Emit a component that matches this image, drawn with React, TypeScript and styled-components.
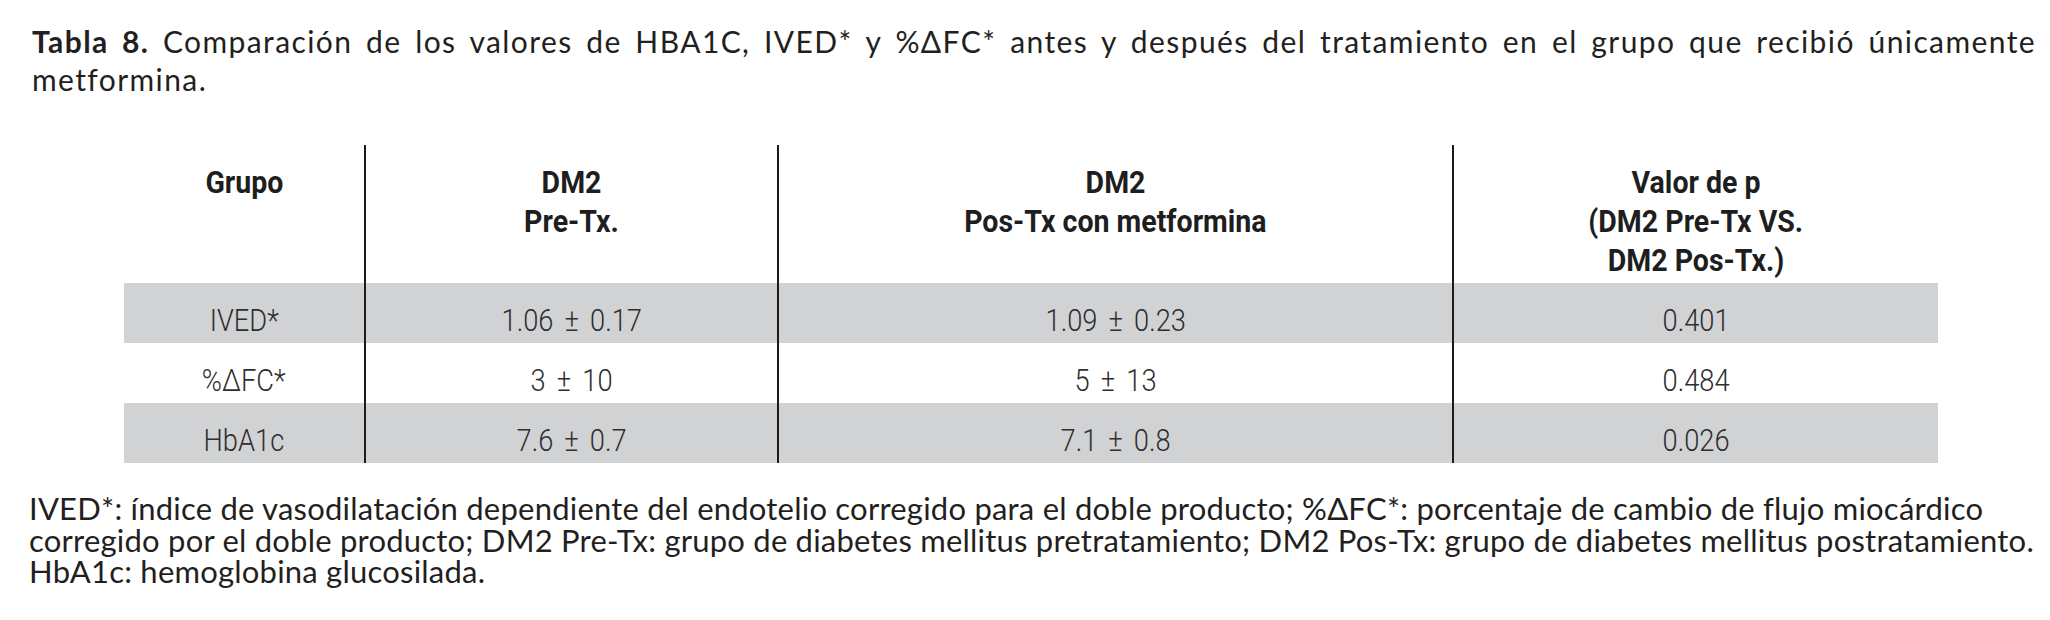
import React from "react";
import styled, { createGlobalStyle } from "styled-components";

const Global = createGlobalStyle`
  html, body { margin: 0; padding: 0; background: #ffffff; }
  body { font-family: Lato, "Open Sans", sans-serif; color: #231f20; }
`;

const Page = styled.div`
  width: 2050px;
  box-sizing: border-box;
  padding: 22px 14px 0 29px;
`;

const Caption = styled.p`
  margin: 0 0 0 3px;
  font-family: Lato, "Open Sans", sans-serif;
  font-size: 30px;
  line-height: 38px;
  letter-spacing: 1.4px;
  text-align: justify;
  color: #231f20;
  b { font-weight: 700; }
`;

const Table = styled.div`
  display: grid;
  grid-template-columns: 240px 413px 675px 486px;
  margin: 47px 0 0 95px;
  width: 1814px;
  font-family: Roboto, "Liberation Sans", sans-serif;
  font-size: 31px;
  color: #1e1e1e;
`;

const HeadCell = styled.div<{ $rule?: boolean }>`
  display: flex;
  flex-direction: column;
  align-items: center;
  padding: 18px 8px 3px;
  line-height: 39px;
  font-weight: 700;
  border-left: ${(p) => (p.$rule ? "2px solid #1c1c1c" : "none")};
`;

const Cell = styled.div<{ $rule?: boolean; $shade?: boolean }>`
  display: flex;
  justify-content: center;
  height: 60px;
  box-sizing: border-box;
  padding: 16px 8px 0;
  line-height: 44px;
  font-weight: 300;
  word-spacing: 5px;
  color: #2e2e2e;
  background: ${(p) => (p.$shade ? "#d1d2d4" : "#ffffff")};
  border-left: ${(p) => (p.$rule ? "2px solid #1c1c1c" : "none")};
`;

const Narrow = styled.span<{ $scale: number }>`
  display: inline-block;
  white-space: nowrap;
  transform: scaleX(${(p) => p.$scale});
  transform-origin: center;
`;

const Notes = styled.p`
  margin: 30px 0 0;
  font-family: Lato, "Open Sans", sans-serif;
  font-size: 31px;
  line-height: 31.5px;
  letter-spacing: 0.22px;
  color: #231f20;
  white-space: nowrap;
`;

const headers: string[][] = [
  ["Grupo"],
  ["DM2", "Pre-Tx."],
  ["DM2", "Pos-Tx con metformina"],
  ["Valor de p", "(DM2 Pre-Tx VS.", "DM2 Pos-Tx.)"],
];

const rows: string[][] = [
  ["IVED*", "1.06 ± 0.17", "1.09 ± 0.23", "0.401"],
  ["%ΔFC*", "3 ± 10", "5 ± 13", "0.484"],
  ["HbA1c", "7.6 ± 0.7", "7.1 ± 0.8", "0.026"],
];

export default function App() {
  return (
    <>
      <Global />
      <Page>
        <Caption>
          <b>Tabla 8.</b> Comparación de los valores de HBA1C, IVED* y %ΔFC* antes y después del
          tratamiento en el grupo que recibió únicamente metformina.
        </Caption>
        <Table>
          {headers.map((h, i) => (
            <HeadCell key={i} $rule={i > 0}>
              {h.map((line, j) => (
                <Narrow key={j} $scale={0.92}>
                  {line}
                </Narrow>
              ))}
            </HeadCell>
          ))}
          {rows.map((r, ri) =>
            r.map((v, ci) => (
              <Cell key={`${ri}-${ci}`} $rule={ci > 0} $shade={ri !== 1}>
                <Narrow $scale={0.88}>{v}</Narrow>
              </Cell>
            ))
          )}
        </Table>
        <Notes>
          IVED*: índice de vasodilatación dependiente del endotelio corregido para el doble producto; %ΔFC*: porcentaje de cambio de flujo miocárdico
          <br />
          corregido por el doble producto; DM2 Pre-Tx: grupo de diabetes mellitus pretratamiento; DM2 Pos-Tx: grupo de diabetes mellitus postratamiento.
          <br />
          HbA1c: hemoglobina glucosilada.
        </Notes>
      </Page>
    </>
  );
}
